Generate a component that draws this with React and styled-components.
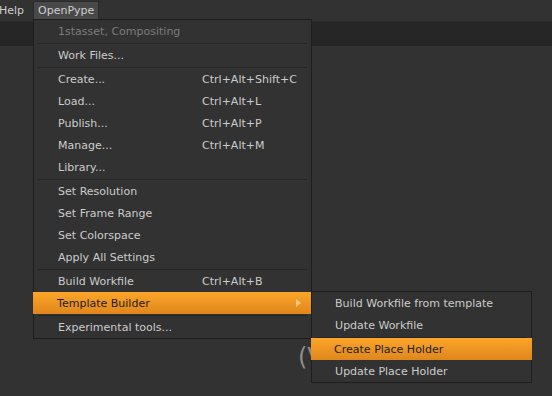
import React from "react";
import styled, { createGlobalStyle } from "styled-components";

const GlobalStyle = createGlobalStyle`
  html, body {
    margin: 0;
    padding: 0;
    background: #323232;
    overflow: hidden;
  }
  body {
    font-family: "DejaVu Sans", "Liberation Sans", sans-serif;
    font-size: 11px;
  }
`;

const mainItems = [
  { label: "1stasset, Compositing", disabled: true },
  { sep: true },
  { label: "Work Files..." },
  { sep: true },
  { label: "Create...", shortcut: "Ctrl+Alt+Shift+C" },
  { label: "Load...", shortcut: "Ctrl+Alt+L" },
  { label: "Publish...", shortcut: "Ctrl+Alt+P" },
  { label: "Manage...", shortcut: "Ctrl+Alt+M" },
  { label: "Library..." },
  { sep: true },
  { label: "Set Resolution" },
  { label: "Set Frame Range" },
  { label: "Set Colorspace" },
  { label: "Apply All Settings" },
  { sep: true },
  { label: "Build Workfile", shortcut: "Ctrl+Alt+B" },
  { label: "Template Builder", active: true, submenu: true },
  { sep: true },
  { label: "Experimental tools..." },
];

const subItems = [
  { label: "Build Workfile from template" },
  { label: "Update Workfile" },
  { sep: true },
  { label: "Create Place Holder", active: true },
  { label: "Update Place Holder" },
];

const App = () => {
  return (
    <>
      <GlobalStyle />
      <Page>
        <MenuBar>
          <BarItem>Help</BarItem>
          <BarItem open>
            OpenPype
            <Dropdown>
              {mainItems.map((item, i) =>
                item.sep ? (
                  <Separator key={i} />
                ) : (
                  <Row key={i} active={item.active} disabled={item.disabled}>
                    <Label>{item.label}</Label>
                    {item.shortcut && <Shortcut>{item.shortcut}</Shortcut>}
                    {item.submenu && (
                      <>
                        <Arrow />
                        <SubMenu>
                          {subItems.map((s, j) =>
                            s.sep ? (
                              <Separator key={j} />
                            ) : (
                              <SubRow key={j} active={s.active}>
                                {s.label}
                              </SubRow>
                            )
                          )}
                        </SubMenu>
                      </>
                    )}
                  </Row>
                )
              )}
            </Dropdown>
          </BarItem>
        </MenuBar>
        <ToolBand />
        <Content>
          <BigText>(V</BigText>
        </Content>
      </Page>
    </>
  );
};

export default App;

const Page = styled.div`
  width: 552px;
  height: 396px;
  display: flex;
  flex-direction: column;
  background: #323232;
`;

const MenuBar = styled.div`
  height: 21px;
  display: flex;
  align-items: center;
  gap: 4px;
  margin-left: -6px;
  background: #323232;
  color: #cfcfcf;
  position: relative;
  z-index: 2;
`;

const BarItem = styled.div`
  position: relative;
  height: 19px;
  line-height: 18px;
  padding: 0 4px;
  box-sizing: border-box;
  background: ${(p) => (p.open ? "#494949" : "transparent")};
  border: 1px solid ${(p) => (p.open ? "#2a2a2a" : "transparent")};
  border-bottom: none;
`;

const ToolBand = styled.div`
  height: 24px;
  background: #262626;
  border-top: 1px solid #2c2c2c;
`;

const Content = styled.div`
  flex: 1;
  padding: 297px 0 0 298px;
`;

const BigText = styled.span`
  font-family: "DejaVu Sans", sans-serif;
  font-size: 24px;
  color: #8c8c8c;
`;

const Dropdown = styled.div`
  position: absolute;
  top: 17px;
  left: -1px;
  width: 279px;
  background: #323232;
  border: 1px solid #1e1e1e;
  box-sizing: border-box;
  line-height: normal;
`;

const Row = styled.div`
  position: relative;
  height: 22px;
  display: flex;
  align-items: center;
  padding-left: 24px;
  margin: 0 ${(p) => (p.active ? "-1px" : "0")};
  color: ${(p) => (p.disabled ? "#7c7c7c" : p.active ? "#1c1c1c" : "#cccccc")};
  background: ${(p) =>
    p.active ? "linear-gradient(#fba629, #df861c)" : "transparent"};
`;

const Label = styled.span`
  width: 144px;
  white-space: nowrap;
`;

const Shortcut = styled.span`
  white-space: nowrap;
`;

const Arrow = styled.span`
  position: absolute;
  right: 11px;
  top: 7px;
  width: 0;
  height: 0;
  border-top: 4px solid transparent;
  border-bottom: 4px solid transparent;
  border-left: 5px solid #f6c583;
`;

const Separator = styled.div`
  height: 2px;
  margin: 0 4px;
  display: flex;
  align-items: center;
  &::after {
    content: "";
    flex: 1;
    height: 1px;
    background: #252525;
  }
`;

const SubMenu = styled.div`
  position: absolute;
  top: -1px;
  left: 278px;
  width: 221px;
  background: #323232;
  border: 1px solid #1e1e1e;
  box-sizing: border-box;
`;

const SubRow = styled.div`
  height: 22px;
  display: flex;
  align-items: center;
  padding-left: 23px;
  margin: 0 ${(p) => (p.active ? "-1px" : "0")};
  white-space: nowrap;
  color: ${(p) => (p.active ? "#1c1c1c" : "#cccccc")};
  background: ${(p) =>
    p.active ? "linear-gradient(#fba629, #df861c)" : "transparent"};
`;
